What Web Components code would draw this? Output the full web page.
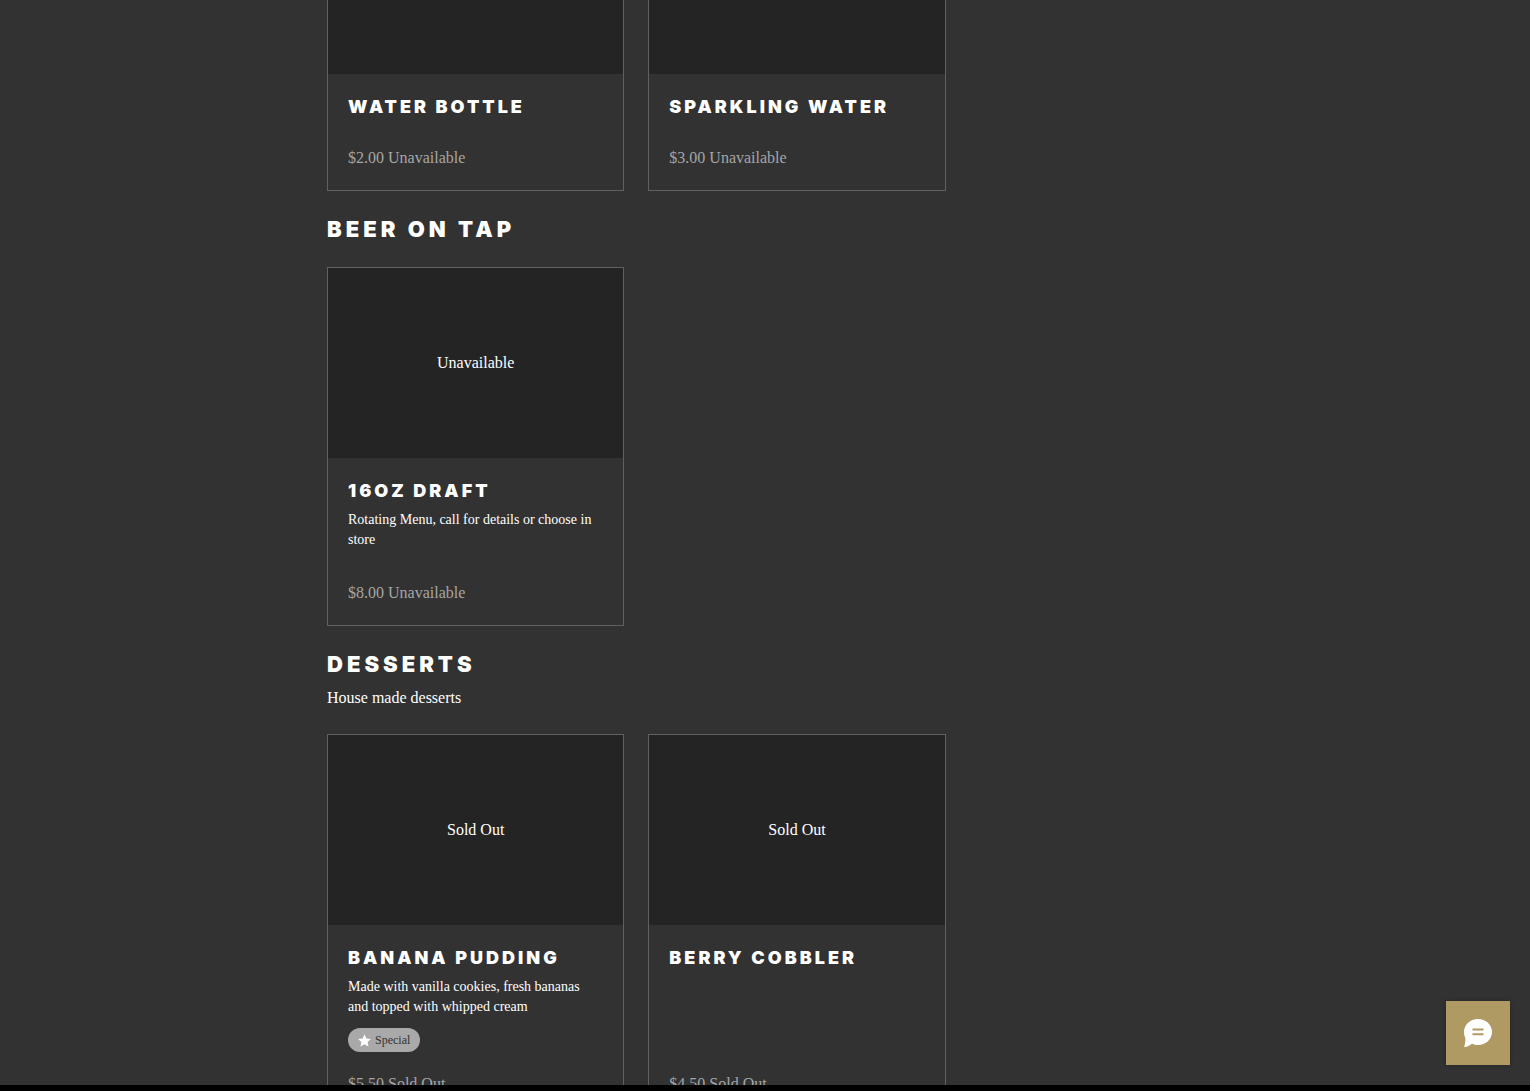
<!DOCTYPE html>
<html lang="en">
<head>
<meta charset="utf-8">
<meta name="viewport" content="width=device-width, initial-scale=1">
<title>Menu</title>
<style>
:root{--page:#323232;--media:#242424;--line:#606060;--text:#fff;--muted:#a6a6a6;--gold:#ae9a62;--display:Inter,"Open Sans",sans-serif}
body{margin:0;background:#000;color:var(--text);font:16px/24px "Liberation Serif",serif}
</style>
</head>
<body>
<menu-page>
  <menu-section>
    <menu-item cut name="WATER BOTTLE" price="$2.00" status="Unavailable"></menu-item>
    <menu-item cut name="SPARKLING WATER" price="$3.00" status="Unavailable"></menu-item>
  </menu-section>
  <menu-section heading="BEER ON TAP">
    <menu-item name="16OZ DRAFT" price="$8.00" status="Unavailable">Rotating Menu, call for details or choose in store</menu-item>
  </menu-section>
  <menu-section heading="DESSERTS" note="House made desserts">
    <menu-item name="BANANA PUDDING" price="$5.50" status="Sold Out">Made with vanilla cookies, fresh bananas and topped with whipped cream<item-label slot="label">Special</item-label></menu-item>
    <menu-item name="BERRY COBBLER" price="$4.50" status="Sold Out"></menu-item>
  </menu-section>
  <chat-button slot="chat"></chat-button>
</menu-page>
<script>
class MenuPage extends HTMLElement{
  constructor(){super();this.attachShadow({mode:'open'}).innerHTML=`
  <style>
  :host{display:flex;flex-direction:column;height:100vh;overflow:hidden}
  .view{flex:1;min-height:0;overflow:hidden;background:var(--page);padding-left:64px}
  main{max-width:940px;margin:0 auto}
  footer{height:6px;background:#000}
  </style>
  <div class="view"><main><slot></slot></main></div><footer></footer><slot name="chat"></slot>`}
}
class MenuSection extends HTMLElement{
  connectedCallback(){
    if(this.shadowRoot)return;
    const h=this.getAttribute('heading'),n=this.getAttribute('note');
    this.attachShadow({mode:'open'}).innerHTML=`
    <style>
    :host{display:block}
    header{padding:25px 0 24px;display:flex;flex-direction:column;gap:9px}
    header.plain{padding-bottom:25px}
    h2{margin:0;font:900 22px/26px var(--display);letter-spacing:4px}
    p{margin:0}
    .grid{display:grid;grid-template-columns:repeat(3,minmax(0,1fr));gap:24px}
    @media(max-width:900px){.grid{grid-template-columns:1fr}}
    </style>
    <section>${h?`<header class="${n?'':'plain'}"><h2>${h}</h2>${n?`<p>${n}</p>`:''}</header>`:''}<div class="grid"><slot></slot></div></section>`}
}
class MenuItem extends HTMLElement{
  connectedCallback(){
    if(this.shadowRoot)return;
    const a=k=>this.getAttribute(k),cut=this.hasAttribute('cut');
    this.attachShadow({mode:'open'}).innerHTML=`
    <style>
    :host{display:flex;flex-direction:column;border:1px solid var(--line)}
    :host([cut]){border-top:0}
    .media{height:190px;background:var(--media);display:flex;align-items:center;justify-content:center}
    :host([cut]) .media{height:74px}
    .body{flex:1;display:flex;flex-direction:column;align-items:flex-start;padding:20px}
    h3{margin:0 0 6px;font:900 18px/26px var(--display);letter-spacing:3px}
    .desc{margin:0 0 11px;font-size:14px;line-height:20px}
    .desc.none{display:none}
    .price{margin:auto 0 0;padding-top:20px;color:var(--muted)}
    </style>
    <div class="media">${cut?'':`<span>${a('status')}</span>`}</div>
    <div class="body"><h3>${a('name')}</h3><p class="desc"><slot></slot></p><slot name="label"></slot><p class="price">${a('price')} ${a('status')}</p></div>`;
    const sync=()=>this.shadowRoot.querySelector('.desc').classList.toggle('none',!this.textContent.trim());
    this.shadowRoot.querySelector('slot').addEventListener('slotchange',sync);
    sync();
  }
}
class ItemLabel extends HTMLElement{
  constructor(){super();this.attachShadow({mode:'open'}).innerHTML=`
  <style>
  :host{display:inline-flex;align-items:center;gap:4px;height:24px;padding:0 10px;box-sizing:border-box;border-radius:12px;background:#a9a9a9;color:#323232;font-size:12px;line-height:24px}
  svg{width:13px;height:13px;fill:#fff}
  </style>
  <svg viewBox="0 0 13 13" aria-hidden="true"><path d="M6.5 0.3 8.4 4.4 12.9 4.9 9.6 8 10.5 12.6 6.5 10.3 2.5 12.6 3.4 8 0.1 4.9 4.6 4.4Z"/></svg><slot></slot>`}
}
class ChatButton extends HTMLElement{
  constructor(){super();this.attachShadow({mode:'open'}).innerHTML=`
  <style>
  :host{position:fixed;right:20px;bottom:26px;display:block}
  button{display:flex;align-items:center;justify-content:center;width:64px;height:64px;padding:0;border:0;background:var(--gold);box-shadow:0 0 4px #0004;cursor:pointer}
  svg{width:28px;height:28px}
  </style>
  <button type="button" aria-label="Chat"><svg viewBox="0 0 28 28" aria-hidden="true"><path fill="#fff" d="M14 0C21.9 0 28 5.7 28 13S21.9 26 14 26C11.8 26 9.8 25.6 8 24.8 5.6 26.6 3.2 27.8 0 28.3 1 25.5 1.4 22.6 1.4 19.3 0.5 17.4 0 15.3 0 13 0 5.7 6.1 0 14 0Z"/><path fill="none" stroke="#ae9a62" stroke-width="2" d="M8.5 10.5H19.5M8.5 15.2H19.5"/></svg></button>`}
}
customElements.define('menu-page',MenuPage);
customElements.define('menu-section',MenuSection);
customElements.define('menu-item',MenuItem);
customElements.define('item-label',ItemLabel);
customElements.define('chat-button',ChatButton);
</script>
</body>
</html>
